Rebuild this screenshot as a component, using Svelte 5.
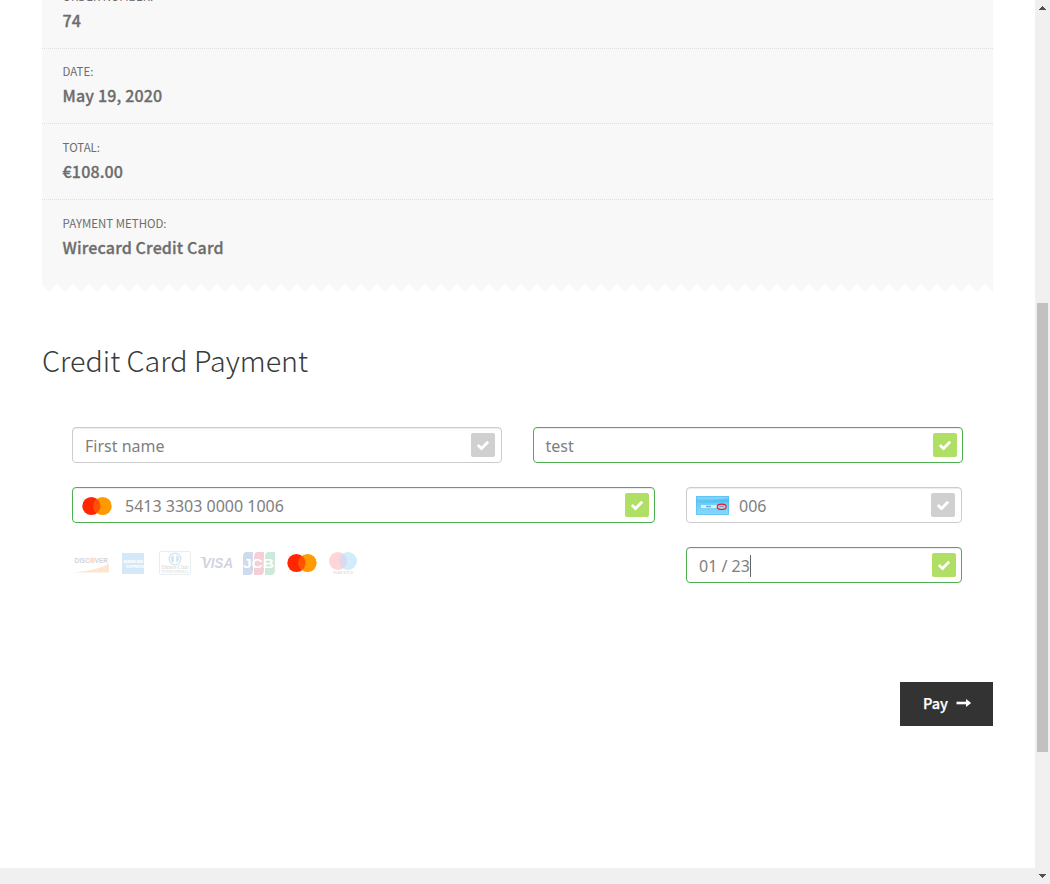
<script>
  const details = [
    { label: 'Order number:', value: '74' },
    { label: 'Date:', value: 'May 19, 2020' },
    { label: 'Total:', value: '€108.00' },
    { label: 'Payment method:', value: 'Wirecard Credit Card' }
  ];

  let edge = 'M0 0H951V8';
  for (let x = 951; x > 7; x -= 16) edge += `L${x - 8} 0L${x - 16} 8`;
  edge += 'L0 1Z';
</script>

{#snippet check(ok)}
  <span class="check" class:ok>
    <svg width="24" height="24" viewBox="0 0 24 24"><path d="M6.8 12.1L10.5 15.6L17.2 8.8" fill="none" stroke="#fff" stroke-width="2.8" /></svg>
  </span>
{/snippet}

{#snippet mastercard()}
  <svg class="mc" width="30" height="20" viewBox="0 0 30 20">
    <circle cx="9.4" cy="10" r="9.1" fill="#ff2600" />
    <circle cx="20.6" cy="10" r="9.1" fill="#ff9a00" />
    <path d="M15 2.8A9.1 9.1 0 0 1 15 17.2A9.1 9.1 0 0 1 15 2.8Z" fill="#ff5300" />
  </svg>
{/snippet}

<div class="window">
  <div class="view">
    <main>
      <ul class="receipt">
        {#each details as d}
          <li><span class="label">{d.label}</span><strong>{d.value}</strong></li>
        {/each}
      </ul>
      <svg class="edge" width="951" height="8" viewBox="0 0 951 8"><path d={edge} fill="#f8f8f8" /></svg>

      <h2>Credit Card Payment</h2>

      <form>
        <div class="row names">
          <div class="field"><span class="text">First name</span>{@render check(false)}</div>
          <div class="field valid last"><span class="text">test</span>{@render check(true)}</div>
        </div>
        <div class="row card">
          <div class="field valid number">{@render mastercard()}<span class="text">5413 3303 0000 1006</span>{@render check(true)}</div>
          <div class="field cvv">
            <svg class="cvv-icon" width="33" height="19" viewBox="0 0 33 19">
              <defs>
                <linearGradient id="blue" x1="0" y1="0" x2="0" y2="1">
                  <stop offset="0" stop-color="#58c4f6" /><stop offset="1" stop-color="#8bd8fb" />
                </linearGradient>
              </defs>
              <rect width="33" height="19" fill="url(#blue)" />
              <path d="M0 0H33V2L0 7Z" fill="#7dd3fa" />
              <path d="M0 3.500H33V6.500H0Z" fill="#3bb5ee" opacity=".45" />
              <rect x="5" y="9" width="20" height="3" fill="#d7f1fd" />
              <path d="M10 10.500H15" stroke="#6fa4cc" stroke-width="1.500" />
              <path d="M.5 .5H32.500V18.500H.5Z" fill="none" stroke="#4dbcf0" opacity=".6" />
              <ellipse cx="25.700" cy="10.800" rx="4.500" ry="2.700" fill="#b4cfe8" stroke="#e01b24" stroke-width="1.100" />
              <path d="M23.500 10.500H28" stroke="#7f9fc5" stroke-width="1.200" />
            </svg>
            <span class="text">006</span>{@render check(false)}
          </div>
        </div>
        <div class="row card">
          <div class="brands">
            <svg width="290" height="30" viewBox="0 0 290 30">
              <g opacity=".2">
                <text x="2.500" y="15" class="sans" font-size="7.600" font-weight="700" fill="#222" textLength="33.500" lengthAdjust="spacingAndGlyphs">DISCOVER</text>
                <circle cx="20.300" cy="12.300" r="2.900" fill="#f37021" />
                <path d="M37 15.500V24.500H2Q27 22 37 15.500Z" fill="#f58220" />
                <rect x="50" y="5" width="22" height="21" fill="#2d8fe0" />
                <text x="51" y="14.800" class="sans" font-size="4.200" font-weight="700" fill="#fff" textLength="20">AMERICAN</text>
                <text x="54" y="20.300" class="sans" font-size="4.200" font-weight="700" fill="#fff" textLength="18">EXPRESS</text>
                <rect x="87.500" y="3.500" width="31" height="23" rx="1.500" fill="none" stroke="#8aa9bd" />
                <circle cx="103" cy="11" r="5.800" fill="none" stroke="#2374ad" stroke-width="1.300" />
                <path d="M101.700 7.200A4 4 0 0 0 101.700 14.800ZM104.300 7.200A4 4 0 0 1 104.300 14.800Z" fill="#2374ad" />
                <text x="89.500" y="21.200" class="serif" font-size="6" fill="#222" textLength="27">Diners Club</text>
                <text x="89.500" y="25" class="serif" font-size="3.600" fill="#222" textLength="27">INTERNATIONAL</text>
                <text x="130" y="20" class="sans" font-size="15.500" font-weight="700" font-style="italic" fill="#1a1f71" textLength="31" lengthAdjust="spacingAndGlyphs">VISA</text>
                <path d="M127.500 9H133L134.500 13.500Q132 10 127.500 9Z" fill="#1a1f71" />
                <path d="M174.500 4H181V22Q181 27 177 27H171V9Q171 4 174.500 4Z" fill="#0b4ea2" />
                <path d="M186 4H192V22Q192 27 188 27H182V9Q182 4 186 4Z" fill="#d2123b" />
                <path d="M197 4H203V22Q203 27 199 27H193V9Q193 4 197 4Z" fill="#0d9446" />
              </g>
              <text x="171" y="19.500" class="sans" font-size="12" font-weight="700" fill="#fff" textLength="31" lengthAdjust="spacingAndGlyphs">JCB</text>
              <g transform="translate(215 5)">
                <circle cx="9.400" cy="10" r="9.100" fill="#ff2600" />
                <circle cx="20.600" cy="10" r="9.100" fill="#ff9a00" />
                <path d="M15 2.800A9.100 9.100 0 0 1 15 17.200A9.100 9.100 0 0 1 15 2.800Z" fill="#ff5300" />
              </g>
              <circle cx="266" cy="13" r="9" fill="#ffd5d8" />
              <circle cx="276" cy="13" r="9" fill="#d3ecfb" />
              <path d="M271 5.500A9 9 0 0 1 271 20.500A9 9 0 0 1 271 5.500Z" fill="#dcd9ec" />
              <text x="261" y="26" class="sans" font-size="4.500" font-weight="700" fill="#222" opacity=".15" textLength="20">maestro</text>
            </svg>
          </div>
          <div class="field valid expiry"><span class="text">01 / 23</span><i class="caret"></i>{@render check(true)}</div>
        </div>
      </form>

      <button>
        <span>Pay</span>
        <svg width="16" height="10" viewBox="0 0 16 10"><path d="M.5 5H11" stroke="#fff" stroke-width="2.600" /><path d="M10 1L15.200 5L10 9Z" fill="#fff" /></svg>
      </button>
    </main>
    <footer></footer>
  </div>
  <aside>
    <svg width="9" height="6" viewBox="0 0 9 6"><path d="M1 5V4H2V3H3V2H4V1H5V2H6V3H7V4H8V5Z" fill="#505050" shape-rendering="crispEdges" /></svg>
    <div class="thumb"></div>
    <svg width="9" height="6" viewBox="0 0 9 6"><path d="M1 1V2H2V3H3V4H4V5H5V4H6V3H7V2H8V1Z" fill="#505050" shape-rendering="crispEdges" /></svg>
  </aside>
</div>

<style>
  :global(body) { margin: 0; overflow: hidden; background: #fff; }
  .window { width: 1050px; height: 884px; display: flex; overflow: hidden; font-family: "Noto Sans CJK SC", sans-serif; color: #6d6d6d; }
  .view { width: 1035px; height: 884px; display: flex; flex-direction: column; overflow: hidden; }
  main { height: 868px; padding: 0 42px; box-sizing: border-box; display: flex; flex-direction: column; overflow: hidden; }
  footer { height: 16px; background: #f0f0f0; }
  .receipt { list-style: none; margin: -27px 0 0; padding: 0; height: 311px; flex: none; background: #f8f8f8; }
  li { height: 75.600px; box-sizing: border-box; padding: 14.800px 20.600px 0; border-bottom: 1px dotted #e0e0e0; }
  li:last-child { border: 0; }
  .label { display: block; font-size: 11.450px; line-height: 16px; text-transform: uppercase; }
  strong { display: block; margin-top: 4px; font-size: 16px; line-height: 24px; font-weight: 500; letter-spacing: .15px; -webkit-text-stroke: .3px #6d6d6d; }
  .edge { display: block; flex: none; }
  h2 { margin: 46px 0 0; font-size: 28.700px; line-height: 44px; font-weight: 300; color: #3a3a3a; flex: none; white-space: nowrap; }
  form { margin: 45px 30px 0; display: flex; flex-direction: column; gap: 24px; flex: none; }
  .row { display: flex; height: 36px; gap: 31px; }
  .field { box-sizing: border-box; height: 36px; border: 1px solid #ccc; border-radius: 4px; display: flex; align-items: center; padding: 0 6px 0 12px; box-shadow: inset 0 1px 1px rgba(0,0,0,.075); background: #fff; }
  .valid { border-color: #4caf50; }
  .names .field { width: 430px; flex: none; }
  .names .last { padding: 0 5px 0 11.500px; }
  .number { width: 583px; padding: 0 5px 0 9px; }
  .cvv, .expiry { width: 276px; }
  .cvv { padding-left: 9px; }
  .expiry { padding-right: 5px; }
  .mc { margin: 2px 13px 0 0; }
  .cvv-icon { margin-right: 10px; }
  .text { font-family: "Noto Sans", sans-serif; font-size: 16px; line-height: 24px; color: #808080; padding-top: 2px; white-space: nowrap; }
  .check { width: 24px; height: 24px; border-radius: 2px; background: #d0d0d0; margin-left: auto; }
  .check svg { display: block; }
  .ok { background: #b0df66; }
  .caret { width: 1px; height: 22px; background: #666; margin-top: 2px; }
  .brands { width: 583px; }
  .brands svg { display: block; margin-top: 1px; }
  .sans { font-family: "Liberation Sans", sans-serif; }
  .serif { font-family: "Liberation Serif", serif; }
  button { width: 93px; height: 44px; flex: none; margin: 99px 0 0 auto; padding: 0 21px 2px 23px; border: 0; background: #333; color: #fff; font: 500 14.500px/20px "Noto Sans CJK SC", sans-serif; -webkit-text-stroke: .25px #fff; display: flex; align-items: center; justify-content: space-between; }
  aside { width: 15px; background: #f0f0f0; display: flex; flex-direction: column; align-items: center; justify-content: space-between; padding: 5px 0; box-sizing: border-box; position: relative; }
  .thumb { position: absolute; left: 2px; top: 303px; width: 11px; height: 449px; background: #c1c1c1; }
</style>
